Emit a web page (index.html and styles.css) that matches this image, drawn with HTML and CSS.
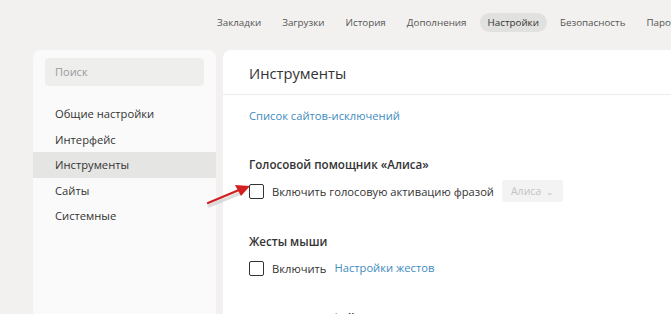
FILE: index.html
```html
<!DOCTYPE html>
<html lang="ru">
<head>
    <meta charset="UTF-8">
    <title>Настройки</title>
    <link rel="stylesheet" href="styles.css">
</head>
<body>
    <nav class="topnav">
        <a class="nav-item">Закладки</a>
        <a class="nav-item">Загрузки</a>
        <a class="nav-item">История</a>
        <a class="nav-item">Дополнения</a>
        <a class="nav-item active">Настройки</a>
        <a class="nav-item">Безопасность</a>
        <a class="nav-item">Пароли и карты</a>
    </nav>

    <div class="layout">
        <aside class="sidebar">
            <div class="search">Поиск</div>
            <ul class="menu">
                <li>Общие настройки</li>
                <li>Интерфейс</li>
                <li class="selected">Инструменты</li>
                <li>Сайты</li>
                <li>Системные</li>
            </ul>
        </aside>

        <main class="panel">
            <h1 class="panel-title">Инструменты</h1>
            <div class="panel-body">
                <a class="link">Список сайтов-исключений</a>

                <section class="section">
                    <h2>Голосовой помощник «Алиса»</h2>
                    <div class="row">
                        <span class="checkbox"></span>
                        <span>Включить голосовую активацию фразой</span>
                        <span class="select">Алиса <span class="chevron">⌄</span></span>
                    </div>
                </section>

                <section class="section">
                    <h2>Жесты мыши</h2>
                    <div class="row">
                        <span class="checkbox"></span>
                        <span>Включить</span>
                        <a class="link">Настройки жестов</a>
                    </div>
                </section>

                <section class="section">
                    <h2>Загруженные файлы</h2>
                </section>
            </div>
        </main>
    </div>

    <svg class="arrow" width="50" height="30" viewBox="0 0 50 30">
        <path d="M2 24 L34 11" stroke="#c9c9c9" stroke-width="3" stroke-linecap="round" opacity="0.6" transform="translate(1 2)"/>
        <path d="M2 23 L33 10" stroke="#d21f1f" stroke-width="2.4" stroke-linecap="round"/>
        <path d="M44 6 L29 5 L35 16 Z" fill="#d21f1f"/>
    </svg>
</body>
</html>
```

FILE: styles.css
```css
body {
    margin: 0;
    background-color: #f2f1ef;
    font-family: "Open Sans", "Noto Sans", sans-serif;
    color: #333;
    overflow: hidden;
    height: 314px;
    position: relative;
}
.topnav {
    display: flex;
    align-items: center;
    gap: 5px;
    height: 44px;
    padding-left: 209px;
    white-space: nowrap;
}
.nav-item {
    font-size: 9.8px;
    color: #555;
    padding: 3px 8px;
    line-height: 13px;
    border-radius: 10px;
}
.nav-item.active {
    background-color: #e1e1df;
    color: #333;
}
.layout {
    display: flex;
    gap: 7px;
    padding-left: 33px;
    margin-top: 6px;
}
.sidebar {
    width: 183px;
    flex: none;
    height: 270px;
    background-color: #fafafa;
    border-radius: 8px 8px 0 0;
    padding-top: 8px;
    box-sizing: border-box;
}
.search {
    margin: 0 12px;
    height: 28px;
    line-height: 28px;
    padding-left: 10px;
    background-color: #eeeeed;
    border-radius: 4px;
    font-size: 11px;
    color: #999;
}
.menu {
    list-style: none;
    margin: 15px 0 0;
    padding: 0;
}
.menu li {
    height: 25.5px;
    line-height: 25.5px;
    padding-left: 22px;
    font-size: 11.2px;
    color: #333;
}
.menu li.selected {
    background-color: #e5e5e4;
}
.panel {
    width: 560px;
    flex: none;
    height: 270px;
    background-color: #fff;
    border-radius: 8px 0 0 0;
}
.panel-title {
    margin: 0;
    height: 44px;
    line-height: 46px;
    padding-left: 26px;
    font-size: 14.7px;
    font-weight: normal;
    color: #333;
    border-bottom: 1px solid #ececec;
}
.panel-body {
    padding: 8px 26px 0;
}
.link {
    display: inline-block;
    font-size: 11.2px;
    line-height: 20px;
    color: #3e8bbf;
}
.section {
    margin-top: 29px;
}
.section + .section {
    margin-top: 30px;
}
.section h2 {
    margin: 0 0 5px;
    font-size: 11.6px;
    line-height: 20px;
    font-weight: 600;
    color: #333;
}
.row {
    display: flex;
    align-items: center;
    height: 22px;
    font-size: 11.2px;
    gap: 8px;
}
.checkbox {
    width: 13px;
    height: 13px;
    border: 1.5px solid #333;
    border-radius: 2px;
    flex: none;
}
.select {
    height: 22px;
    line-height: 22px;
    padding: 0 9px;
    background-color: #f3f3f3;
    border-radius: 3px;
    color: #c4c4c4;
    font-size: 10.5px;
}
.chevron {
    font-size: 9px;
    margin-left: 2px;
}
.arrow {
    position: absolute;
    left: 206px;
    top: 180px;
}
```
